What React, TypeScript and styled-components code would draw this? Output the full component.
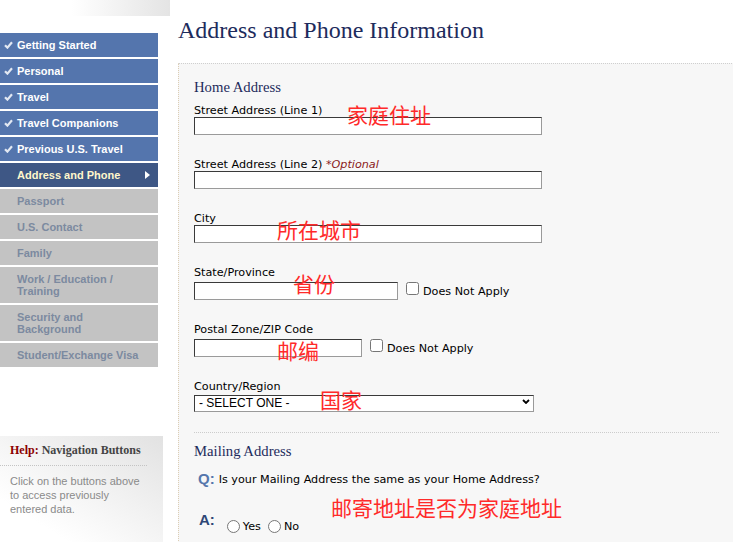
import React from "react";
import styled, { createGlobalStyle } from "styled-components";

const Global = createGlobalStyle`
  html, body { margin: 0; padding: 0; overflow: hidden; background: #fff; }
  body { font-family: "Liberation Sans", Arial, sans-serif; }
`;

const Page = styled.div`
  display: flex;
  align-items: flex-start;
  width: 736px;
  height: 542px;
`;

/* ---------- Sidebar ---------- */
const Sidebar = styled.aside`
  flex: none;
  width: 170px;
  display: flex;
  flex-direction: column;
`;

const TopFade = styled.div`
  height: 16px;
  background: linear-gradient(to right, #ffffff 0%, #ffffff 42%, #e4e4e4 100%);
`;

const Nav = styled.nav`
  margin-top: 17px;
  width: 158px;
  display: flex;
  flex-direction: column;
  gap: 2px;
`;

type StepState = "done" | "active" | "todo";

const NavItem = styled.div<{ $state: StepState }>`
  display: flex;
  align-items: center;
  box-sizing: border-box;
  min-height: 24px;
  padding: 6px ${(p) => (p.$state === "active" ? 8 : 14)}px 6px 4px;
  font: bold 11px/12px "Liberation Sans", Arial, sans-serif;
  background: ${(p) =>
    p.$state === "done" ? "#5475ad" : p.$state === "active" ? "#3e5785" : "#c3c3c3"};
  color: ${(p) =>
    p.$state === "done" ? "#ffffff" : p.$state === "active" ? "#fff6cc" : "#7c8aa0"};
`;

const IconSlot = styled.span`
  flex: none;
  width: 13px;
  display: flex;
  align-items: center;
`;

const NavText = styled.span`
  flex: 1;
`;

const Arrow = styled.svg`
  flex: none;
  margin-left: auto;
`;

const Help = styled.section`
  margin-top: 69px;
  width: 163px;
  height: 110px;
  box-sizing: border-box;
  padding-top: 7px;
  background: linear-gradient(212deg, #e2e2e2 0%, #f1f1f1 40%, #ffffff 78%);
`;

const HelpTitle = styled.h3`
  margin: 0;
  padding-left: 10px;
  font: bold 12px/14px "Liberation Serif", "Times New Roman", serif;
  color: #444444;
`;

const HelpKey = styled.span`
  color: #8b0000;
`;

const HelpRule = styled.hr`
  margin: 8px 16px 0 0;
  height: 0;
  border: 0;
  border-top: 1px dotted #c4c4c4;
`;

const HelpText = styled.p`
  margin: 8px 0 0;
  padding: 0 20px 0 10px;
  font: 11px/14px "Liberation Sans", Arial, sans-serif;
  color: #8a8a8a;
`;

/* ---------- Main ---------- */
const Main = styled.main`
  flex: 1;
  padding-left: 8px;
  display: flex;
  flex-direction: column;
`;

const Title = styled.h1`
  margin: 16px 0 0;
  font: normal 24px/28px "Liberation Serif", "Times New Roman", serif;
  color: #1d2b5c;
`;

const Panel = styled.section`
  margin-top: 19px;
  padding: 15px 16px 40px 15px;
  background: #f7f7f7;
  border-top: 1px dotted #cfcfcf;
  border-left: 1px dotted #dccdb4;
  border-right: 1px dotted #cfcfcf;
`;

const SectionTitle = styled.h2`
  margin: 0;
  font: normal 14.7px/17px "Liberation Serif", "Times New Roman", serif;
  color: #1d2b5c;
`;

const FieldList = styled.div`
  margin-top: 8px;
  display: flex;
  flex-direction: column;
  gap: 23px;
`;

const Field = styled.div`
  position: relative;
  display: flex;
  flex-direction: column;
  align-items: flex-start;
`;

const Label = styled.label`
  padding-top: 1px;
  font: 11.2px/12px "DejaVu Sans", Verdana, sans-serif;
  color: #000;
`;

const Optional = styled.em`
  color: #8b1a1a;
`;

const InputRow = styled.div<{ $shift?: boolean }>`
  display: flex;
  align-items: flex-start;
  margin-top: ${(p) => (p.$shift ? 3 : 0)}px;
`;

const TextInput = styled.input<{ $w: number }>`
  box-sizing: border-box;
  width: ${(p) => p.$w}px;
  height: 18px;
  margin: 0;
  padding: 0 3px;
  border: 1px solid;
  border-color: #3a3a3a #9a9a9a #9a9a9a #3a3a3a;
  border-radius: 0;
  background: #fff;
  font: 12px "Liberation Sans", Arial, sans-serif;
`;

const CheckBox = styled.input`
  width: 13px;
  height: 13px;
  margin: 0 0 0 8px;
`;

const CheckText = styled.span`
  margin: 3px 0 0 4px;
  font: 11.2px/13px "DejaVu Sans", Verdana, sans-serif;
  color: #000;
`;

const SelectWrap = styled.div`
  position: relative;
  width: 340px;
  height: 17px;
`;

const Select = styled.select`
  appearance: none;
  box-sizing: border-box;
  width: 100%;
  height: 100%;
  margin: 0;
  padding: 0 0 0 4px;
  border: 1px solid;
  border-color: #3a3a3a #9a9a9a #9a9a9a #3a3a3a;
  border-radius: 0;
  background: #fff;
  color: #000;
  font: 12px "Liberation Sans", Arial, sans-serif;
`;

const Chevron = styled.svg`
  position: absolute;
  right: 4px;
  top: 6px;
  pointer-events: none;
`;

const Separator = styled.hr`
  margin: 22px 0 0;
  height: 0;
  border: 0;
  border-top: 1px dotted #cccccc;
`;

const MailTitle = styled(SectionTitle)`
  margin-top: 10px;
`;

const QABlock = styled.div`
  position: relative;
  margin-top: 10px;
`;

const QRow = styled.div`
  display: flex;
  align-items: center;
  gap: 4px;
  padding-left: 4px;
  height: 18px;
`;

const QMark = styled.span`
  font: bold 15px/18px "Liberation Sans", Arial, sans-serif;
  color: #5576ac;
`;

const QText = styled.span`
  font: 11.2px/13px "DejaVu Sans", Verdana, sans-serif;
  color: #000;
`;

const ARow = styled.div`
  display: flex;
  align-items: flex-start;
  margin-top: 23px;
  padding-left: 5px;
`;

const AMark = styled.span`
  font: bold 15px/18px "Liberation Sans", Arial, sans-serif;
  color: #2f4776;
`;

const RadioGroup = styled.div`
  display: flex;
  align-items: center;
  margin: 9px 0 0 12px;
`;

const RadioOption = styled.label`
  display: flex;
  align-items: center;
  gap: 3px;
  margin-right: 7px;
  font: 11.2px/13px "DejaVu Sans", Verdana, sans-serif;
  color: #000;
`;

const Radio = styled.input`
  width: 13px;
  height: 13px;
  margin: 0;
`;

const Note = styled.span<{ $top: number; $left: number }>`
  position: absolute;
  top: ${(p) => p.$top}px;
  left: ${(p) => p.$left}px;
  font: 21px/21px "Noto Sans CJK SC", sans-serif;
  color: #ff2a2a;
  white-space: nowrap;
  pointer-events: none;
`;

const steps: { label: string; state: StepState }[] = [
  { label: "Getting Started", state: "done" },
  { label: "Personal", state: "done" },
  { label: "Travel", state: "done" },
  { label: "Travel Companions", state: "done" },
  { label: "Previous U.S. Travel", state: "done" },
  { label: "Address and Phone", state: "active" },
  { label: "Passport", state: "todo" },
  { label: "U.S. Contact", state: "todo" },
  { label: "Family", state: "todo" },
  { label: "Work / Education / Training", state: "todo" },
  { label: "Security and Background", state: "todo" },
  { label: "Student/Exchange Visa", state: "todo" },
];

const CheckIcon = () => (
  <svg width="9" height="8" viewBox="0 0 9 8">
    <path d="M1 4.2 L3.4 6.6 L8 1.2" fill="none" stroke="#e2e8f2" strokeWidth="2.2" />
  </svg>
);

export default function App() {
  return (
    <>
      <Global />
      <Page>
        <Sidebar>
          <TopFade />
          <Nav>
            {steps.map((s) => (
              <NavItem key={s.label} $state={s.state}>
                <IconSlot>{s.state === "done" && <CheckIcon />}</IconSlot>
                <NavText>{s.label}</NavText>
                {s.state === "active" && (
                  <Arrow width="5" height="8" viewBox="0 0 5 8">
                    <path d="M0 0 L5 4 L0 8 Z" fill="#ffffff" />
                  </Arrow>
                )}
              </NavItem>
            ))}
          </Nav>
          <Help>
            <HelpTitle>
              <HelpKey>Help:</HelpKey> Navigation Buttons
            </HelpTitle>
            <HelpRule />
            <HelpText>Click on the buttons above to access previously entered data.</HelpText>
          </Help>
        </Sidebar>

        <Main>
          <Title>Address and Phone Information</Title>
          <Panel>
            <SectionTitle>Home Address</SectionTitle>
            <FieldList>
              <Field>
                <Label>Street Address (Line 1)</Label>
                <InputRow>
                  <TextInput $w={348} />
                </InputRow>
                <Note $top={0} $left={153}>家庭住址</Note>
              </Field>
              <Field>
                <Label>
                  Street Address (Line 2) <Optional>*Optional</Optional>
                </Label>
                <InputRow>
                  <TextInput $w={348} />
                </InputRow>
              </Field>
              <Field>
                <Label>City</Label>
                <InputRow>
                  <TextInput $w={348} />
                </InputRow>
                <Note $top={7} $left={83}>所在城市</Note>
              </Field>
              <Field>
                <Label>State/Province</Label>
                <InputRow $shift>
                  <TextInput $w={204} />
                  <CheckBox type="checkbox" />
                  <CheckText>Does Not Apply</CheckText>
                </InputRow>
                <Note $top={7} $left={99}>省份</Note>
              </Field>
              <Field>
                <Label>Postal Zone/ZIP Code</Label>
                <InputRow $shift>
                  <TextInput $w={168} />
                  <CheckBox type="checkbox" />
                  <CheckText>Does Not Apply</CheckText>
                </InputRow>
                <Note $top={17} $left={83}>邮编</Note>
              </Field>
              <Field>
                <Label>Country/Region</Label>
                <SelectWrap>
                  <Select defaultValue="">
                    <option value="">- SELECT ONE -</option>
                  </Select>
                  <Chevron width="8" height="5" viewBox="0 0 8 5">
                    <path d="M1 1 L4 4 L7 1" fill="none" stroke="#000" strokeWidth="1.8" />
                  </Chevron>
                </SelectWrap>
                <Note $top={9} $left={126}>国家</Note>
              </Field>
            </FieldList>

            <Separator />
            <MailTitle>Mailing Address</MailTitle>
            <QABlock>
              <QRow>
                <QMark>Q:</QMark>
                <QText>Is your Mailing Address the same as your Home Address?</QText>
              </QRow>
              <ARow>
                <AMark>A:</AMark>
                <RadioGroup>
                  <RadioOption>
                    <Radio type="radio" name="mailSame" />
                    Yes
                  </RadioOption>
                  <RadioOption>
                    <Radio type="radio" name="mailSame" />
                    No
                  </RadioOption>
                </RadioGroup>
              </ARow>
              <Note $top={27} $left={137}>邮寄地址是否为家庭地址</Note>
            </QABlock>
          </Panel>
        </Main>
      </Page>
    </>
  );
}
